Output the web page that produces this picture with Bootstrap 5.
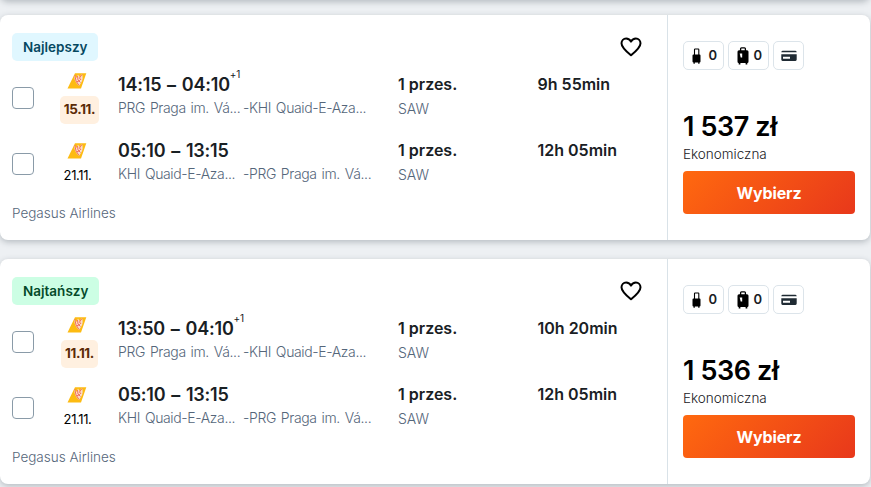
<!DOCTYPE html>
<html lang="pl">
<head>
    <meta charset="UTF-8">
    <meta name="viewport" content="width=device-width, initial-scale=1.0">
    <title>Wyniki wyszukiwania lotów</title>
    <link href="https://cdn.jsdelivr.net/npm/bootstrap@5.3.0/dist/css/bootstrap.min.css" rel="stylesheet">
    <style>
        body {
          background-color: #edf0f3;
          font-family: Inter, "Liberation Sans", sans-serif;
          color: #192024;
          height: 487px;
          overflow: hidden;
        }
        .offer {
          width: 870px;
          height: 225px;
          margin-bottom: 19.4px;
          border: 0;
          border-radius: 8px;
          box-shadow: 0 2px 6px rgba(37, 50, 60, .28);
        }
        .offer-prev {
          height: 20px;
          margin-top: -20px;
          margin-bottom: 15px;
        }
        .offer-main {
          width: 668px;
          padding: 18px 0 0 12px;
          border-right: 1px solid #d9e2e8;
        }
        .offer-side {
          width: 202px;
          padding: 26px 15px 0;
        }
        .offer-tag {
          height: 28px;
          padding: 0 11px;
          border-radius: 5px;
          font-size: 13.5px;
          font-weight: 600;
          line-height: 28px;
        }
        .tag-best { background-color: #e0f7ff; color: #054861; }
        .tag-cheap { background-color: #ccfee4; color: #044a29; }
        .heart { margin: 4px 25px 0 0; }

        .leg { height: 66px; }
        .leg .form-check-input {
          width: 22px;
          height: 22px;
          margin: 0;
          border: 1px solid #8a9ba8;
          border-radius: 4px;
        }
        .leg-date { width: 43px; margin-left: 24px; margin-right: 17px; }
        .leg-date svg { margin-right: 5px; margin-bottom: 7px; }
        .day {
          height: 20px;
          margin-right: 4px;
          font-size: 13px;
          line-height: 18px;
          letter-spacing: -.4px;
          color: #000;
        }
        .day-hot {
          height: 28px;
          padding: 0 4px;
          border-radius: 5px;
          background-color: #fff0e0;
          color: #5b2a06;
          font-size: 13.5px;
          font-weight: 700;
          line-height: 27px;
          letter-spacing: -.35px;
        }
        .leg-text { margin-top: -4px; }
        .leg-route { width: 280px; }
        .leg-stop { width: 139.500px; }
        .leg-top { height: 26px; font-size: 16px; font-weight: 600; line-height: 25px; }
        .leg-route .leg-top { font-size: 18px; word-spacing: 1.5px; letter-spacing: -.2px; }
        .leg-top sup { top: -13px; font-size: 10px; font-weight: 400; line-height: 0; vertical-align: baseline; }
        .leg-sub { height: 22px; font-size: 14px; font-weight: 300; line-height: 19px; color: #55667a; white-space: nowrap; }
        .leg-route .leg-sub { letter-spacing: -.36px; word-spacing: 1.3px; }
        .leg-stop .leg-sub { line-height: 21px; }
        .leg-sub .from { width: 125px; }
        .leg-time { padding-bottom: 22px; }
        .carrier { font-size: 13.5px; font-weight: 300; line-height: 32px; color: #55667a; }

        .chip {
          height: 29px;
          padding: 0 6px 0 7px;
          border: 1px solid #dce4ea;
          border-radius: 5px;
          font-size: 13px;
          font-weight: 600;
        }
        .chip-bag { width: 41px; }
        .chip-bag span { margin-left: auto; }
        .chip-bag svg { margin-left: 1px; }
        .price { margin-top: 39px; font-size: 27px; font-weight: 600; line-height: 36px; letter-spacing: -.4px; color: #000; }
        .cabin { font-size: 13.5px; font-weight: 300; line-height: 19px; }
        .btn-pick {
          height: 43px;
          margin-top: 7px;
          border: 0;
          border-radius: 4px;
          background: linear-gradient(135deg, #ff690f 0%, #e8381b 100%);
          color: #fff;
          font-size: 16px;
          font-weight: 700;
          letter-spacing: -.1px;
        }
    </style>
</head>
<body>

    <!--Ikony-->
    <svg class="d-none">
        <symbol id="heart" viewBox="0 0 22 20">
            <path d="M11 18.3C7.8 15.6 1.5 10.8 1.5 6.3 1.5 3.500 3.600 1.500 6.100 1.500 8.300 1.500 10 2.700 11 4.600 12 2.700 13.700 1.500 15.900 1.500 18.400 1.500 20.500 3.500 20.500 6.300 20.500 10.800 14.200 15.600 11 18.300Z" fill="none" stroke="#000" stroke-width="2" stroke-linejoin="round"/>
        </symbol>
        <symbol id="pegasus" viewBox="0 0 20 16">
            <path d="M8 .3H19.300L14 15.500H.5Z" fill="#fdbb12"/>
            <path d="M7.500 2C7 6 8 9 12 13L14 10C16 7 16 4 15 1L12.500 4 11 1.500 9.500 5Z" fill="#fbdcca"/>
            <path d="M7.800 2 9 8 12 12.500M10.500 3 11 7 13.500 9.500M15 1.500 12.500 5 14 7M9.500 9 13 7.500" fill="none" stroke="#f2705b"/>
        </symbol>
        <symbol id="cabin-bag" viewBox="0 0 9 16">
            <path d="M2.500 7V1.600Q2.500 1 3.100 1H6.200Q6.800 1 6.800 1.600V7" fill="none" stroke="#000" stroke-width="1.100"/>
            <path d="M1.500 6.500H7.500Q8.500 6.500 8.500 7.500V13.500Q8.500 14.500 7.500 14.500V15.700H6.200V14.500H2.800V15.700H1.500V14.500Q.5 14.500 .5 13.500V7.500Q.5 6.500 1.500 6.500Z"/>
        </symbol>
        <symbol id="suitcase" viewBox="0 0 12 18">
            <path d="M3.600 4V1.700Q3.600 .8 4.500 .8H7.500Q8.400 .8 8.400 1.700V4" fill="none" stroke="#000" stroke-width="1.300"/>
            <path d="M2 3.300H10Q11.500 3.300 11.500 4.800V14.500Q11.500 16 10.300 16V17.500H8.600V16H3.400V17.500H1.700V16Q.5 16 .5 14.500V4.800Q.5 3.300 2 3.300Z"/>
            <path d="M2.700 6.500H5.200V10.500H3.700Z" fill="#fff"/>
        </symbol>
        <symbol id="pay-card" viewBox="0 0 16 12">
            <path d="M1.500 .8H14.500Q15.700 .8 15.700 2.300H.3Q.3 .8 1.500 .8ZM.3 4.200H15.700V9.600Q15.700 11 14.500 11H1.500Q.3 11 .3 9.600ZM2 6.800V8.700H9V6.800Z" fill="#1f2a33" fill-rule="evenodd"/>
        </symbol>
    </svg>

    <div class="card offer offer-prev"></div>

    <!--Lista ofert-->
    <div id="offers"></div>

    <script src="https://cdn.jsdelivr.net/npm/bootstrap@5.3.0/dist/js/bootstrap.bundle.min.js"></script>
<script>
  const prg = "PRG Praga im. Vá...";
  const khi = "KHI Quaid-E-Aza...";
  const offers = [
    { tag: "Najlepszy", tagClass: "tag-best", price: "1 537 zł", legs: [
      { day: "15.11.", hot: true, hours: "14:15 – 04:10", plus: "+1", from: prg, to: khi, time: "9h 55min" },
      { day: "21.11.", hours: "05:10 – 13:15", from: khi, to: prg, time: "12h 05min" },
    ] },
    { tag: "Najtańszy", tagClass: "tag-cheap", price: "1 536 zł", legs: [
      { day: "11.11.", hot: true, hours: "13:50 – 04:10", plus: "+1", from: prg, to: khi, time: "10h 20min" },
      { day: "21.11.", hours: "05:10 – 13:15", from: khi, to: prg, time: "12h 05min" },
    ] },
  ];

  function legRow(l) {
    return `
      <div class="leg d-flex align-items-center">
        <input class="form-check-input flex-shrink-0" type="checkbox">
        <div class="leg-date d-flex flex-column align-items-center flex-shrink-0">
          <svg width="20" height="16"><use href="#pegasus"/></svg>
          <div class="${l.hot ? "day-hot" : "day"}">${l.day}</div>
        </div>
        <div class="leg-text leg-route">
          <div class="leg-top"><span class="hours">${l.hours}</span>${l.plus ? `<sup>${l.plus}</sup>` : ""}</div>
          <div class="leg-sub d-flex"><span class="from">${l.from}</span><span>-${l.to}</span></div>
        </div>
        <div class="leg-text leg-stop">
          <div class="leg-top">1 przes.</div>
          <div class="leg-sub">SAW</div>
        </div>
        <div class="leg-text leg-time"><div class="leg-top">${l.time}</div></div>
      </div>`;
  }

  document.getElementById("offers").innerHTML = offers.map(o => `
    <div class="card offer flex-row">
      <div class="offer-main">
        <div class="d-flex justify-content-between align-items-start mb-1">
          <div class="offer-tag ${o.tagClass}">${o.tag}</div>
          <svg class="heart" width="22" height="20"><use href="#heart"/></svg>
        </div>
        ${o.legs.map(legRow).join("")}
        <div class="carrier">Pegasus Airlines</div>
      </div>
      <div class="offer-side">
        <div class="d-flex gap-1">
          <div class="chip chip-bag d-flex align-items-center"><svg width="9" height="16"><use href="#cabin-bag"/></svg><span>0</span></div>
          <div class="chip chip-bag d-flex align-items-center"><svg width="12" height="18"><use href="#suitcase"/></svg><span>0</span></div>
          <div class="chip d-flex align-items-center"><svg width="16" height="12"><use href="#pay-card"/></svg></div>
        </div>
        <div class="price">${o.price}</div>
        <div class="cabin">Ekonomiczna</div>
        <button class="btn btn-pick w-100">Wybierz</button>
      </div>
    </div>`).join("");
</script>

</body>
</html>
